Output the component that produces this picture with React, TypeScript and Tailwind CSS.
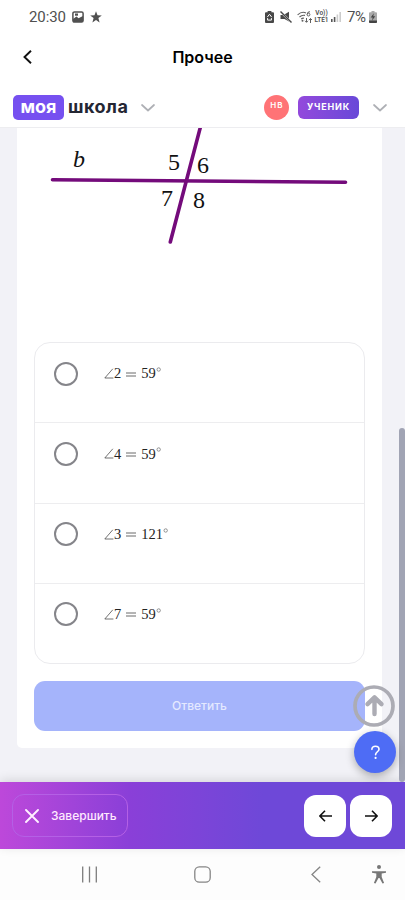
import React from "react";

const answers = [
  { angle: "2", value: "59" },
  { angle: "4", value: "59" },
  { angle: "3", value: "121" },
  { angle: "7", value: "59" },
];

const StatusBar: React.FC = () => {
  return (
    <div className="flex h-[34px] items-center pl-[29px] pr-7 font-[Roboto,sans-serif] text-[#505050]">
      <span className="w-[43px] text-[15px] leading-none tracking-[-0.1px]">20:30</span>
      <svg width="12" height="12" viewBox="0 0 12 12" fill="none">
        <rect x="0.9" y="0.9" width="10.2" height="10.2" rx="1.5" stroke="#505050" strokeWidth="1.5" />
        <path d="M1 8L4.5 5.5l2 1.7L11 5v6H1z" fill="#505050" />
        <path d="M3 2.5h3v2.2H3z" fill="#505050" />
      </svg>
      <svg className="ml-1.5" width="12" height="12" viewBox="0 0 12 12" fill="#505050">
        <path d="M6 .3l1.5 3.9 4.3.2-3.4 2.7 1.2 4.3L6 9.1l-3.6 2.3 1.2-4.3L.2 4.4l4.3-.2z" />
      </svg>

      <div className="ml-auto flex items-center">
        <svg width="9" height="12" viewBox="0 0 9 12" fill="none">
          <path d="M2.6 0h3.8v1.2H8q1 0 1 1V11q0 1-1 1H1q-1 0-1-1V2.2q0-1 1-1h1.6z" fill="#484848" />
          <path d="M2.3 6.1l2.2-2.8 2.2 2.8M2.6 7.1v2h3.8v-2" stroke="#fff" strokeWidth="1" />
        </svg>
        <svg className="ml-[6px]" width="12" height="12" viewBox="0 0 12 12" fill="none">
          <path d="M.5 4h3L9 .7v9.8L4.5 8h-4z" fill="#484848" />
          <path d="M.5.5l11 11" stroke="#fff" strokeWidth="2" />
          <path d="M.5.5l11 11" stroke="#484848" strokeWidth="1.4" />
        </svg>
        <svg className="ml-[5px]" width="16" height="13" viewBox="0 0 16 13" fill="none" stroke="#606060">
          <path d="M.6 3.8Q5-.1 9 2M2.5 6Q5 3.7 8 4.4M4.2 8Q5.5 6.8 7 7.2" strokeWidth="1.1" />
          <circle cx="5.5" cy="9.8" r="1" fill="#606060" stroke="none" />
          <path d="M13 .7q-2.8-.2-2.8 2.7" strokeWidth="1" />
          <circle cx="11.5" cy="3.6" r="1.4" strokeWidth="1" />
          <path d="M9.5 7v4.2M8 9.8l1.5 1.5L11 9.8M13.5 12V7.5M12 9l1.5-1.5L15 9" strokeWidth="1" />
        </svg>
        <div className="ml-px flex w-[15px] flex-col items-center text-[6.5px] font-semibold leading-[7px]">
          <span>Vo))</span>
          <span>LTE1</span>
        </div>
        <svg className="ml-[2px]" width="10" height="10" viewBox="0 0 10 10">
          <path d="M0 7h1.6v3H0zM2.8 5h1.6v5H2.8z" fill="#555" />
          <path d="M5.6 2.5h1.6V10H5.6zM8.4 0H10v10H8.4z" fill="#ccc" />
        </svg>
        <span className="ml-[6px] w-[22px] pt-px text-[15px] leading-none tracking-[-0.5px]">7%</span>
        <svg width="8" height="12" viewBox="0 0 8 12">
          <path d="M2.5 0h3v1.2H7q1 0 1 1V11q0 1-1 1H1q-1 0-1-1V2.2q0-1 1-1h1.5z" fill="#aaa" />
          <path d="M0 9.5h8V11q0 1-1 1H1q-1 0-1-1zM4.8 2.2L1.7 6.5h2L3 9.5l3.3-4.3h-2z" fill="#444" />
        </svg>
      </div>
    </div>
  );
};

const ChevronDown: React.FC = () => (
  <svg width="14" height="8" viewBox="0 0 14 8" fill="none">
    <path d="M1 1l6 5.5L13 1" stroke="#aeb0b5" strokeWidth="1.7" strokeLinecap="round" strokeLinejoin="round" />
  </svg>
);

const Header: React.FC = () => {
  return (
    <header className="h-32 bg-white">
      <StatusBar />

      {/* Title */}
      <div className="grid h-[46px] grid-cols-[60px_1fr_60px] items-center">
        <svg className="ml-[23px]" width="9" height="14" viewBox="0 0 9 14" fill="none">
          <path d="M8 .8L1.5 7 8 13.2" stroke="#111" strokeWidth="1.9" />
        </svg>
        <h1 className="text-center text-[16px] font-semibold text-black">Прочее</h1>
      </div>

      {/* School logo and profile */}
      <div className="flex h-12 items-center border-b border-[#ededf0] pl-[13px] pr-[18px] pt-[7px]">
        <div className="flex h-[25px] w-[51px] items-center justify-center rounded-[5px] bg-[#7650f0] pb-px text-[18px] font-bold text-white">
          моя
        </div>
        <span className="ml-[4px] w-[61px] whitespace-nowrap pb-px text-[18px] font-bold tracking-[0.5px] text-[#242633]">
          школа
        </span>
        <div className="ml-[12px] pt-0.5">
          <ChevronDown />
        </div>
        <div className="ml-auto flex size-[25px] justify-center rounded-full bg-[#ff7376] pl-px pt-[5px] text-[8px] font-semibold leading-[10px] tracking-[1.2px] text-white">
          НВ
        </div>
        <div className="ml-[9px] flex h-[23px] w-[61px] items-center justify-center rounded-[6px] bg-linear-to-r from-[#9349dc] to-[#6848d8] text-[9px] font-bold tracking-[0.85px] text-white">
          УЧЕНИК
        </div>
        <div className="ml-[14px] pt-0.5">
          <ChevronDown />
        </div>
      </div>
    </header>
  );
};

const Diagram: React.FC = () => {
  return (
    <svg className="block" width="365" height="214" viewBox="17 128 365 214">
      <g stroke="#740b7b" strokeWidth="3.6" strokeLinecap="round">
        <path d="M52.5 179.8L345.5 182.2" />
        <path d="M202 121L170.3 242" />
      </g>
      <g className="font-['Liberation_Serif',serif] text-[24px]" fill="#111">
        <text x="73" y="167" fontStyle="italic">b</text>
        <text x="168" y="170">5</text>
        <text x="197" y="173">6</text>
        <text x="161" y="206">7</text>
        <text x="193" y="208">8</text>
      </g>
    </svg>
  );
};

type AnswerProps = {
  angle: string;
  value: string;
};

const Answer: React.FC<AnswerProps> = ({ angle, value }) => {
  return (
    <label className="flex h-[80.3px] items-start border-b border-[#ededef] pl-[19px] pt-[18.6px] last:border-b-0">
      <span className="size-6 rounded-full border-[2.4px] border-[#85858a]" />
      <span className="ml-[26px] flex h-6 items-center pt-px font-['Liberation_Serif',serif] text-[14.5px] text-[#242424]">
        <svg className="mb-px" width="10" height="11" viewBox="0 0 10 11" fill="none">
          <path d="M8.8.8L.8 10h8.6" stroke="#444" strokeWidth="0.75" />
        </svg>
        <span>{angle}</span>
        <svg className="mx-[5px]" width="10" height="5" viewBox="0 0 10 5" stroke="#444" strokeWidth="0.8">
          <path d="M0 1h10M0 4h10" />
        </svg>
        <span>{value}</span>
        <svg className="mb-[9px]" width="5" height="5" viewBox="0 0 5 5" fill="none">
          <circle cx="2.7" cy="2.5" r="1.7" stroke="#555" strokeWidth="0.6" />
        </svg>
      </span>
    </label>
  );
};

const BottomBar: React.FC = () => {
  return (
    <footer className="relative flex h-[67px] items-center bg-linear-to-r from-[#bd48da] via-[#8a3fd8] via-32% to-[#6e48d8] to-65% pl-3 pr-[13px] shadow-[0_-2px_10px_rgba(0,0,0,0.12)]">
      <button className="flex h-[43px] w-[116px] items-center rounded-[12px] border border-[#b460e5] pl-[12px] text-[12px] font-medium text-[#ffe9ff]">
        <svg className="mr-[12px]" width="14" height="14" viewBox="0 0 14 14" fill="none">
          <path d="M1 1l12 12M13 1L1 13" stroke="#fff0ff" strokeWidth="1.9" strokeLinecap="round" />
        </svg>
        Завершить
      </button>
      <div className="ml-auto flex gap-[4px]">
        <button className="flex size-[42px] items-center justify-center rounded-[12px] bg-white">
          <svg width="13" height="12" viewBox="0 0 13 12" fill="none">
            <path d="M13 6H1M6 .8L.9 6 6 11.2" stroke="#111" strokeWidth="1.6" />
          </svg>
        </button>
        <button className="flex size-[42px] items-center justify-center rounded-[12px] bg-white">
          <svg width="13" height="12" viewBox="0 0 13 12" fill="none">
            <path d="M0 6h12M7 .8L12.1 6 7 11.2" stroke="#111" strokeWidth="1.6" />
          </svg>
        </button>
      </div>
    </footer>
  );
};

const SystemNav: React.FC = () => {
  return (
    <nav className="flex h-[51px] items-center bg-[#fdfdfd] pl-[81px] pr-[18px]">
      <svg width="17" height="17" viewBox="0 0 17 17" stroke="#7d7d7d" strokeWidth="1.3">
        <path d="M1.7.5v16M8.5.5v16M15.3.5v16" />
      </svg>
      <svg className="ml-24" width="17" height="17" viewBox="0 0 17 17" fill="none">
        <rect x="0.8" y="0.8" width="15.4" height="15.4" rx="4.5" stroke="#858585" strokeWidth="1.3" />
      </svg>
      <svg className="ml-[100px]" width="10" height="17" viewBox="0 0 10 17" fill="none">
        <path d="M9.2.7L1 8.5l8.2 7.8" stroke="#858585" strokeWidth="1.3" />
      </svg>
      <svg className="ml-auto" width="16" height="19" viewBox="0 0 16 19" fill="#777">
        <circle cx="8" cy="2.1" r="2" />
        <path d="M1 6.2h14v1.6l-4.3.8v3.3l2.4 6-1.6.6L8.5 13h-1l-3 5.5-1.6-.6 2.4-6V8.6L1 7.8z" />
      </svg>
    </nav>
  );
};

const App: React.FC = () => {
  return (
    <div className="relative h-[900px] w-[405px] overflow-hidden bg-[#f2f2f7] font-[Inter,sans-serif]">
      <Header />

      <main className="h-[654px]">
        <section className="ml-[17px] h-[620px] w-[365px] rounded-b-[5px] bg-white">
          <Diagram />
          <div className="mx-[17px] h-[322px] overflow-hidden rounded-[16px] border border-[#ebebee]">
            {answers.map((answer) => (
              <Answer key={answer.angle} {...answer} />
            ))}
          </div>
          <button className="mx-[17px] mt-[17px] flex h-[50px] w-[331px] items-center justify-center rounded-[11px] bg-[#a5b4fb] text-[12px] font-medium text-[#e4e9ff]">
            Ответить
          </button>
        </section>
      </main>

      <BottomBar />
      <SystemNav />

      {/* Scrollbar thumb */}
      <div className="absolute right-0 top-[428px] h-[354px] w-[6px] rounded-[3px] bg-[#a1a4b4]" />

      {/* Floating buttons */}
      <button className="absolute left-[353px] top-[685px]">
        <svg width="42" height="42" viewBox="0 0 42 42" fill="none" stroke="#acacb4">
          <circle cx="21" cy="21" r="19" strokeWidth="3.7" />
          <path d="M21.5 29V13M14.5 19.2l7-6.8 7 6.8" strokeWidth="4.4" strokeLinecap="round" strokeLinejoin="round" />
        </svg>
      </button>
      <button className="absolute left-[354px] top-[731px] flex size-[42px] items-center justify-center rounded-full bg-[#4e6cf5] shadow-[0_3px_8px_rgba(0,0,0,0.3)]">
        <svg width="9" height="15" viewBox="0 0 10 16" fill="none">
          <path d="M1 4.5C1 2.2 2.6 1 4.9 1S8.9 2.3 8.9 4.3c0 2.8-3.8 3-3.8 6.2" stroke="#fff" strokeWidth="1.8" strokeLinecap="round" />
          <circle cx="5.1" cy="14" r="1.2" fill="#fff" />
        </svg>
      </button>
    </div>
  );
};

export default App;
